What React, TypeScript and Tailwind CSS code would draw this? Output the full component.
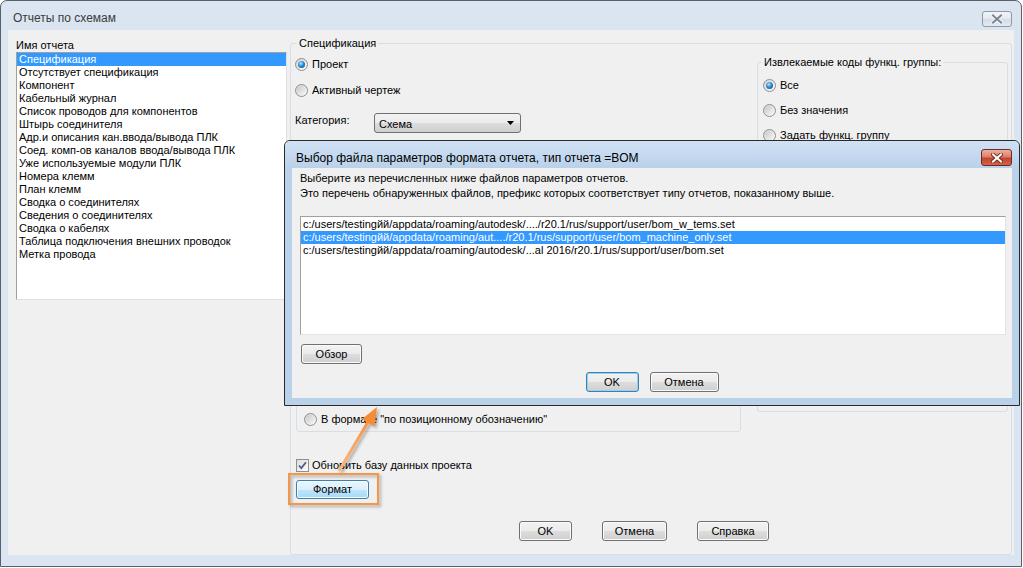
import type { ReactNode } from "react";
import clsx from "clsx";

const reports = [
  "Спецификация",
  "Отсутствует спецификация",
  "Компонент",
  "Кабельный журнал",
  "Список проводов для компонентов",
  "Штырь соединителя",
  "Адр.и описания кан.ввода/вывода ПЛК",
  "Соед. комп-ов каналов ввода/вывода ПЛК",
  "Уже используемые модули ПЛК",
  "Номера клемм",
  "План клемм",
  "Сводка о соединителях",
  "Сведения о соединителях",
  "Сводка о кабелях",
  "Таблица подключения внешних проводок",
  "Метка провода",
];

const setFiles = [
  "c:/users/testingйй/appdata/roaming/autodesk/..../r20.1/rus/support/user/bom_w_tems.set",
  "c:/users/testingйй/appdata/roaming/aut..../r20.1/rus/support/user/bom_machine_only.set",
  "c:/users/testingйй/appdata/roaming/autodesk/...al 2016/r20.1/rus/support/user/bom.set",
];

const buttonStyles = {
  normal:
    "border-[#707070] bg-[linear-gradient(#f2f2f2_0%,#ebebeb_50%,#dddddd_51%,#cfcfcf_100%)] shadow-[inset_0_0_0_1px_#fbfbfb]",
  focus:
    "border-[#3c7fb1] bg-[linear-gradient(#f2f2f2_0%,#ebebeb_50%,#dddddd_51%,#cfcfcf_100%)] shadow-[inset_0_0_0_1px_#93d2f4]",
  hover:
    "border-[#3c7fb1] bg-[linear-gradient(#eaf6fd_0%,#d9f0fc_50%,#bee6fd_51%,#a7d9f5_100%)] shadow-[inset_0_0_0_1px_#f4fbff]",
};

function WinButton({
  children,
  className,
  variant = "normal",
}: {
  children: ReactNode;
  className?: string;
  variant?: keyof typeof buttonStyles;
}) {
  return (
    <div
      className={clsx(
        "flex shrink-0 items-center justify-center rounded-[3px] border",
        buttonStyles[variant],
        className,
      )}
    >
      {children}
    </div>
  );
}

function Radio({ checked = false }: { checked?: boolean }) {
  return (
    <span className="flex h-[13px] w-[13px] shrink-0 items-center justify-center rounded-full border border-[#8e8f8f] bg-[linear-gradient(135deg,#d2d2d2,#fdfdfd)]">
      {checked ? (
        <span className="h-[7px] w-[7px] rounded-full bg-[radial-gradient(circle_at_40%_35%,#b9e6ff_0%,#2b8ad1_45%,#0b4d86_100%)]" />
      ) : (
        <span className="h-[9px] w-[9px] rounded-full bg-[linear-gradient(135deg,#c9c9c9,#f7f7f7)]" />
      )}
    </span>
  );
}

function RadioRow({ label, checked, className }: { label: string; checked?: boolean; className?: string }) {
  return (
    <div className={clsx("flex h-[13px] items-center gap-[4px] whitespace-nowrap", className)}>
      <Radio checked={checked} />
      <span>{label}</span>
    </div>
  );
}

function CloseX({ fill, outline }: { fill: string; outline: string }) {
  return (
    <svg width="12" height="10" viewBox="0 0 12 10">
      <path d="M2 1.5 L10 8.5 M10 1.5 L2 8.5" stroke={outline} strokeWidth="4" strokeLinecap="square" />
      <path d="M2 1.5 L10 8.5 M10 1.5 L2 8.5" stroke={fill} strokeWidth="2" strokeLinecap="square" />
    </svg>
  );
}

export default function App() {
  return (
    <div className="relative h-[568px] w-[1023px] overflow-hidden bg-white text-[11px] leading-[13px] text-black [font-family:'Liberation_Sans',Arial,sans-serif]">
      {/* main window */}
      <div className="flex h-[567px] w-[1022px] flex-col rounded-t-[7px] border border-[#59606a] bg-[#dbe5f1]">
        <div className="flex h-[29px] shrink-0 items-start justify-between pl-[12px] pr-[9px]">
          <span className="mt-[10px] text-[12px] leading-[14px] text-[#3c3c3c]">Отчеты по схемам</span>
          <div className="mt-[10px] flex h-[16px] w-[30px] items-center justify-center rounded-[3px] border border-[#8d99a8] bg-[linear-gradient(#f1f4f8_0%,#e2e8ef_50%,#d4dce6_51%,#e3e9f0_100%)]">
            <CloseX fill="#7b8591" outline="#f4f6f9" />
          </div>
        </div>

        <div className="mx-[7px] mb-[11px] flex flex-1 bg-[#f0f0f0]">
          {/* report list */}
          <div className="ml-[8px] w-[271px] pt-[9px]">
            <div className="h-[13px]">Имя отчета</div>
            <div className="h-[248px] border border-[#a0a0a0] border-r-[#e0e0e0] border-b-[#e0e0e0] bg-white">
              {reports.map((r, i) => (
                <div
                  key={r}
                  className={clsx("h-[13px] whitespace-nowrap pl-[2px]", i === 0 && "bg-[#3399ff] text-white")}
                >
                  {r}
                </div>
              ))}
            </div>
          </div>

          {/* specification group */}
          <fieldset className="ml-[3px] mt-[7px] h-[518px] w-[722px] rounded-[3px] border border-[#d5dfe5]">
            <legend className="ml-[6px] px-[2px]">Спецификация</legend>
            <div className="pl-[4px]">
              <div className="flex">
                <div className="flex flex-1 flex-col">
                  <RadioRow label="Проект" checked className="mt-[8px]" />
                  <RadioRow label="Активный чертеж" className="mt-[13px]" />
                  <div className="mt-[16px] flex items-start">
                    <span className="w-[79px] pt-[1px]">Категория:</span>
                    <div className="flex h-[20px] w-[147px] items-center justify-between rounded-[3px] border border-[#707070] bg-[linear-gradient(#f2f2f2_0%,#ebebeb_50%,#dddddd_51%,#cfcfcf_100%)] pl-[4px] pr-[6px]">
                      <span className="pt-[2px]">Схема</span>
                      <svg width="7" height="4" viewBox="0 0 7 4">
                        <path d="M0 0 H7 L3.5 4 Z" fill="#000" />
                      </svg>
                    </div>
                  </div>
                  {/* output format group, mostly covered by the dialog */}
                  <div className="ml-[1px] mt-[23px] flex h-[276px] w-[445px] flex-col rounded-[3px] border border-[#d5dfe5] pb-[5px] pl-[7px]">
                    <RadioRow label='В формате "по позиционному обозначению"' className="mt-auto" />
                  </div>
                </div>

                <fieldset className="mr-[3px] mt-[6px] h-[356px] w-[251px] shrink-0 rounded-[3px] border border-[#d5dfe5]">
                  <legend className="ml-[4px] px-[2px]">Извлекаемые коды функц. группы:</legend>
                  <div className="flex flex-col pl-[5px]">
                    <RadioRow label="Все" checked className="mt-[10px]" />
                    <RadioRow label="Без значения" className="mt-[12px]" />
                    <RadioRow label="Задать функц. группу" className="mt-[12px]" />
                  </div>
                </fieldset>
              </div>

              <div className="ml-[1px] mt-[27px] flex h-[13px] items-center gap-[3px]">
                <span className="flex h-[13px] w-[13px] items-center justify-center border border-[#8e8f8f] bg-[linear-gradient(135deg,#dcdcdc,#fdfdfd)]">
                  <svg width="11" height="11" viewBox="0 0 11 11">
                    <path d="M2 5.5 L4.3 8 L9 2.2" fill="none" stroke="#4d5d8f" strokeWidth="1.8" />
                  </svg>
                </span>
                <span>Обновить базу данных проекта</span>
              </div>

              <WinButton variant="hover" className="ml-[1px] mt-[8px] h-[19px] w-[73px]">
                Формат
              </WinButton>

              <div className="ml-[224px] mt-[22px] flex gap-[30px]">
                <WinButton className="h-[20px] w-[53px]">OK</WinButton>
                <WinButton className="h-[20px] w-[65px]">Отмена</WinButton>
                <WinButton className="h-[20px] w-[72px]">Справка</WinButton>
              </div>
            </div>
          </fieldset>
        </div>
      </div>

      {/* file chooser dialog */}
      <div className="absolute left-[284px] top-[140px] flex h-[266px] w-[736px] flex-col rounded-t-[6px] border border-[#2a2a2a] bg-[#bad1ea]">
        <div className="flex h-[27px] shrink-0 items-start justify-between rounded-t-[5px] bg-[linear-gradient(#d0e1f4,#bad1ea)] pl-[11px] pr-[7px]">
          <span className="mt-[10px] text-[12px] leading-[14px] text-black">
            Выбор файла параметров формата отчета, тип отчета =BOM
          </span>
          <div className="mt-[8px] flex h-[17px] w-[31px] items-center justify-center rounded-[3px] border border-[#6d2a1f] bg-[linear-gradient(#eeb0a2_0%,#dc8069_45%,#c2452d_55%,#d2644a_100%)]">
            <CloseX fill="#ffffff" outline="#7a2c1e" />
          </div>
        </div>
        <div className="mx-[7px] mb-[7px] flex flex-1 flex-col bg-[#f0f0f0]">
          <div className="pl-[8px] pt-[3px] leading-[15px]">
            <div>Выберите из перечисленных ниже файлов параметров отчетов.</div>
            <div>Это перечень обнаруженных файлов, префикс которых соответствует типу отчетов, показанному выше.</div>
          </div>
          <div className="ml-[8px] mt-[15px] h-[119px] w-[706px] border border-[#a0a0a0] border-r-[#e3e3e3] border-b-[#e3e3e3] bg-white pt-[1px]">
            {setFiles.map((f, i) => (
              <div key={f} className={clsx("h-[13px] whitespace-nowrap pl-[2px]", i === 1 && "bg-[#3399ff] text-white")}>
                {f}
              </div>
            ))}
          </div>
          <WinButton className="ml-[9px] mt-[9px] h-[20px] w-[61px]">Обзор</WinButton>
          <div className="mt-[8px] flex justify-center gap-[11px]">
            <WinButton variant="focus" className="h-[20px] w-[53px]">
              OK
            </WinButton>
            <WinButton className="h-[20px] w-[69px]">Отмена</WinButton>
          </div>
        </div>
      </div>

      {/* callout annotation */}
      <svg className="pointer-events-none absolute left-0 top-0" width="1023" height="568">
        <defs>
          <filter id="callout-shadow" x="-20%" y="-20%" width="140%" height="140%">
            <feDropShadow dx="2" dy="2" stdDeviation="1.5" floodColor="#000" floodOpacity="0.3" />
          </filter>
          <linearGradient id="arrow-grad" x1="339" y1="471" x2="377" y2="408" gradientUnits="userSpaceOnUse">
            <stop offset="0" stopColor="#fbb77e" />
            <stop offset="1" stopColor="#f48b34" />
          </linearGradient>
        </defs>
        <g filter="url(#callout-shadow)">
          <rect x="289" y="474" width="89" height="30" fill="none" stroke="#f79646" strokeWidth="2" />
          <line x1="339" y1="471" x2="368" y2="422" stroke="url(#arrow-grad)" strokeWidth="3" />
          <polygon points="377,407 374.5,426.5 362,419" fill="#f48b34" />
        </g>
      </svg>
    </div>
  );
}
